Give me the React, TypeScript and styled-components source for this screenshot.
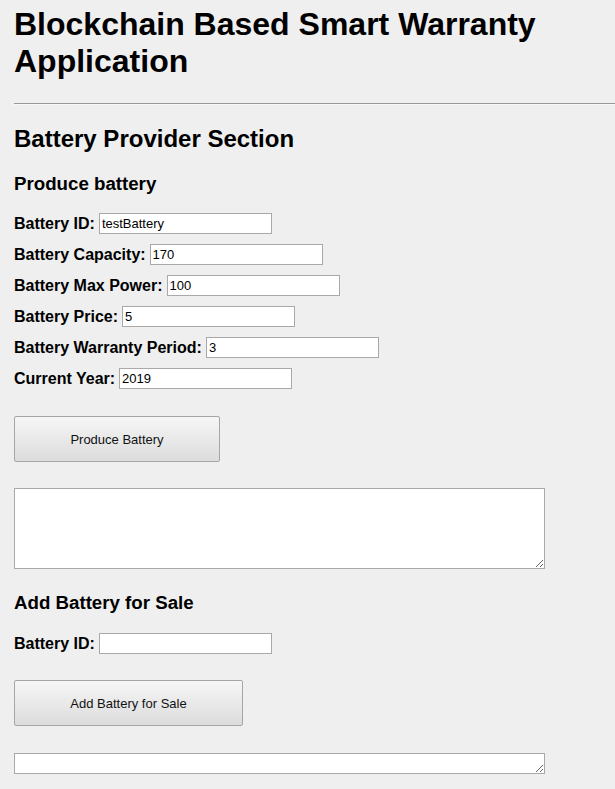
import React from 'react'
import styled, { createGlobalStyle } from 'styled-components'

const GlobalStyle = createGlobalStyle`
  html, body {
    margin: 0;
    padding: 0;
    background: #efefef;
  }
  body {
    font-family: 'Liberation Sans', Arial, sans-serif;
    color: #000;
  }
`

const Page = styled.div`
  padding-left: 14px;
  padding-top: 6px;
`

const Title = styled.h1`
  margin: 0;
  font-size: 32px;
  line-height: 37px;
  font-weight: 700;
`

const Rule = styled.hr`
  margin: 23px 0 0 0;
  border: 0;
  border-top: 1px solid #9a9a9a;
  border-bottom: 1px solid #f8f8f8;
  height: 0;
`

const SectionTitle = styled.h2`
  margin: 20px 0 0 0;
  font-size: 24px;
  line-height: 28px;
  font-weight: 700;
`

const SubTitle = styled.h3<{ top: number }>`
  margin: ${({ top }) => top}px 0 0 0;
  font-size: 18.7px;
  line-height: 22px;
  font-weight: 700;
`

const Fields = styled.div<{ top: number }>`
  display: flex;
  flex-direction: column;
  gap: 10px;
  margin-top: ${({ top }) => top}px;
`

const FieldRow = styled.div`
  display: flex;
  align-items: center;
  height: 21px;
`

const Label = styled.label`
  font-size: 16px;
  font-weight: 700;
  margin-right: 4px;
  white-space: nowrap;
`

const TextInput = styled.input`
  box-sizing: border-box;
  width: 173px;
  height: 21px;
  padding: 1px 2px;
  border: 1px solid #a9a9a9;
  border-radius: 0;
  background: #fff;
  font-family: 'Liberation Sans', Arial, sans-serif;
  font-size: 13px;
  color: #000;
  outline: none;
`

const ActionButton = styled.button<{ w: number; top: number }>`
  display: block;
  box-sizing: border-box;
  width: ${({ w }) => w}px;
  height: 46px;
  margin-top: ${({ top }) => top}px;
  border: 1px solid #a6a6a6;
  border-radius: 2px;
  background: linear-gradient(to bottom, #f6f6f6, #dcdcdc);
  font-family: 'Liberation Sans', Arial, sans-serif;
  font-size: 13px;
  color: #111;
  cursor: pointer;
`

const Output = styled.textarea<{ h: number; top: number }>`
  display: block;
  box-sizing: border-box;
  width: 531px;
  height: ${({ h }) => h}px;
  margin-top: ${({ top }) => top}px;
  border: 1px solid #a9a9a9;
  border-radius: 0;
  background: #fff;
  font-family: 'Liberation Mono', monospace;
  font-size: 13px;
  outline: none;
`

const produceFields = [
  { label: 'Battery ID:', value: 'testBattery' },
  { label: 'Battery Capacity:', value: '170' },
  { label: 'Battery Max Power:', value: '100' },
  { label: 'Battery Price:', value: '5' },
  { label: 'Battery Warranty Period:', value: '3' },
  { label: 'Current Year:', value: '2019' },
]

export default function App() {
  return (
    <>
      <GlobalStyle />
      <Page>
        <Title>
          Blockchain Based Smart Warranty
          <br />
          Application
        </Title>
        <Rule />
        <SectionTitle>Battery Provider Section</SectionTitle>

        <SubTitle top={20}>Produce battery</SubTitle>
        <Fields top={18}>
          {produceFields.map((f) => (
            <FieldRow key={f.label}>
              <Label>{f.label}</Label>
              <TextInput defaultValue={f.value} />
            </FieldRow>
          ))}
        </Fields>
        <ActionButton w={206} top={27}>
          Produce Battery
        </ActionButton>
        <Output h={81} top={26} />

        <SubTitle top={23}>Add Battery for Sale</SubTitle>
        <Fields top={19}>
          <FieldRow>
            <Label>Battery ID:</Label>
            <TextInput />
          </FieldRow>
        </Fields>
        <ActionButton w={229} top={26}>
          Add Battery for Sale
        </ActionButton>
        <Output h={21} top={27} />
      </Page>
    </>
  )
}
